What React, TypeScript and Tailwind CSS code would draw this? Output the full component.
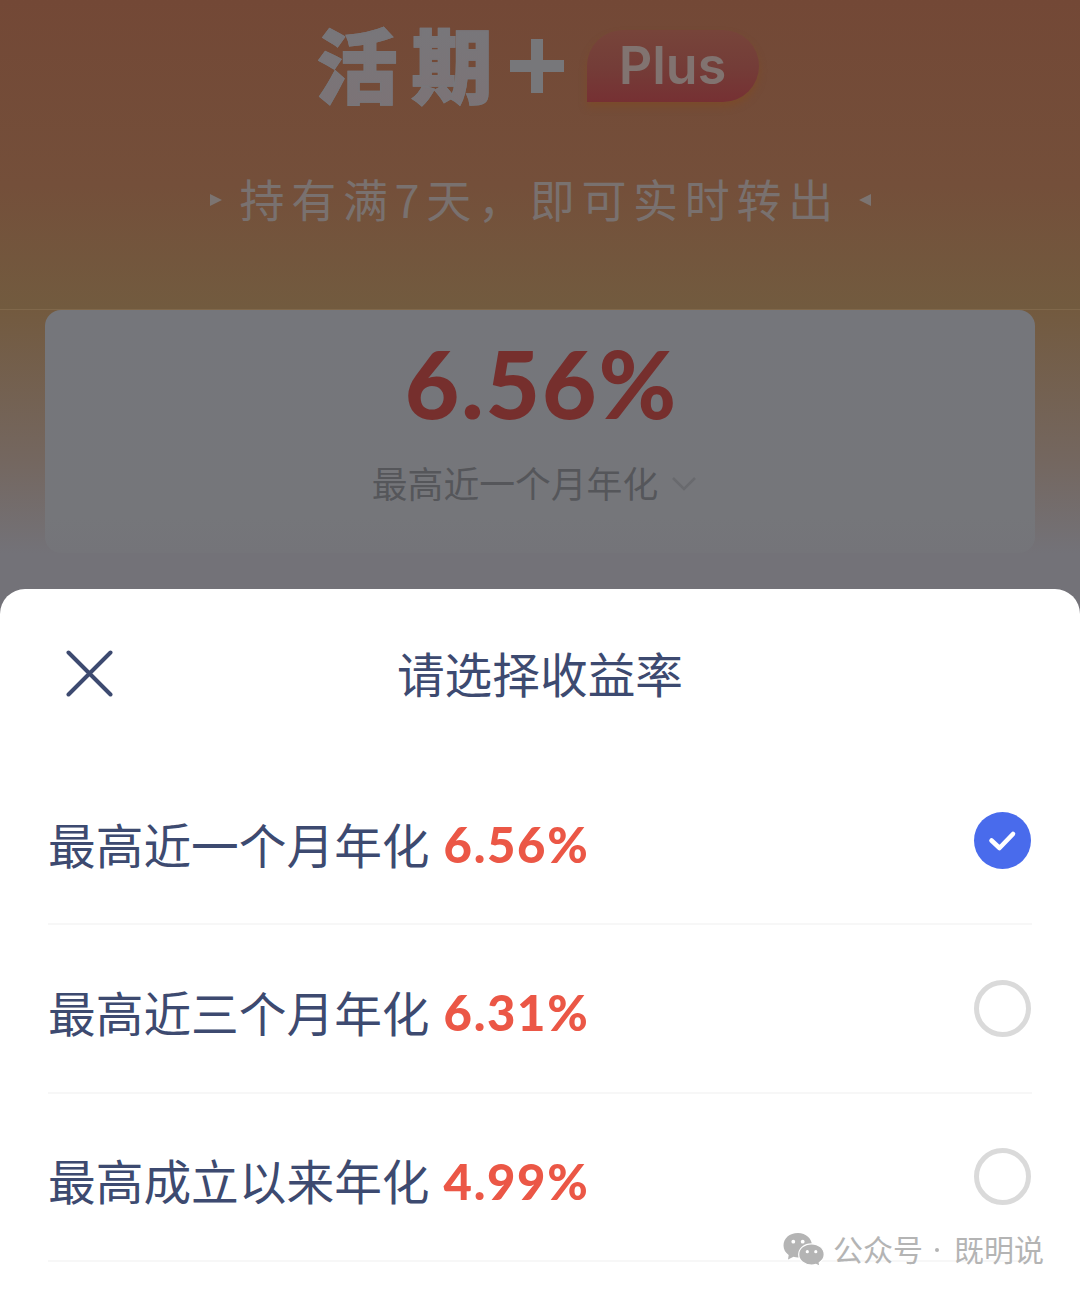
import React from 'react';

const options = [
  { label: '最高近一个月年化', rate: '6.56%', selected: true },
  { label: '最高近三个月年化', rate: '6.31%', selected: false },
  { label: '最高成立以来年化', rate: '4.99%', selected: false },
];

function Hero() {
  return (
    <header className="flex h-[309px] w-full flex-col items-center bg-linear-to-b from-[#734836] via-[#744f3a] via-60% to-[#725b3f]">
      <div className="mt-[16px] flex h-[100px] items-center pr-[5px]">
        <h1 className="-mt-[9px] w-[192px] shrink-0 bg-linear-to-b from-[#77777b] to-[#7c7376] bg-clip-text text-[81px] leading-[100px] font-black tracking-[14px] whitespace-nowrap text-transparent [-webkit-text-stroke:1.5px_#78767a]">
          活期
        </h1>
        <svg className="ml-px h-[54px] w-[54px] shrink-0" viewBox="0 0 54 54" fill="#77777a">
          <path d="M21 0H33V21H54V33H33V54H21V33H0V21H21Z" />
        </svg>
        <div className="ml-[23px] flex h-[72px] w-[172px] items-center justify-center rounded-tl-[36px] rounded-r-[36px] bg-linear-to-b from-[#77443a] via-[#743d38] to-[#763033] font-['Inter',sans-serif] text-[52px] font-semibold text-[#817370] shadow-[0_5px_7px_#7a4b2c]">
          Plus
        </div>
      </div>
      <div className="mt-[53px] flex h-[62px] items-center">
        <svg className="h-[12px] w-[13px]" viewBox="0 0 13 12" fill="#7c7471"><path d="M1 0L13 6L1 12Z" /></svg>
        <p className="-mt-[2px] ml-[18px] w-[619px] text-[45px] leading-[62px] tracking-[6.7px] whitespace-nowrap text-[#79716f]">
          持有满7天，即可实时转出
        </p>
        <svg className="h-[12px] w-[13px]" viewBox="0 0 13 12" fill="#7c7471"><path d="M12 0L0 6L12 12Z" /></svg>
      </div>
    </header>
  );
}

function RateCard() {
  return (
    <section className="h-[305px] border-t border-[#80684b] bg-linear-to-b from-[#735a3f] via-[#746760] via-50% to-[#737278] to-80% px-[45px]">
      <div className="flex h-[243px] flex-col items-center rounded-[16px] bg-linear-to-b from-[#75767b] via-[#75767a] via-85% to-[#747479]">
        <div className="mt-[17px] h-[112px] pl-[3px] font-['Lato',sans-serif] text-[94px] leading-[112px] font-black tracking-[2px] text-[#762f2d]">
          6.56%
        </div>
        <div className="mt-[17px] flex h-[52px] items-center pr-[12px]">
          <span className="text-[35.8px] leading-[52px] text-[#55565a]">最高近一个月年化</span>
          <svg className="mt-[4px] ml-[14px] h-[16px] w-[24px]" viewBox="0 0 24 16" fill="none" stroke="#696a6e" strokeWidth="2.5">
            <path d="M1 2L12 13L23 2" />
          </svg>
        </div>
      </div>
    </section>
  );
}

function Radio({ selected }: { selected: boolean }) {
  if (!selected) {
    return <span className="h-[57px] w-[57px] rounded-full border-5 border-[#dadada]" />;
  }
  return (
    <span className="flex h-[57px] w-[57px] items-center justify-center rounded-full bg-[#496bec]">
      <svg className="h-[57px] w-[57px]" viewBox="0 0 57 57" fill="none" stroke="#fff" strokeWidth="4.6" strokeLinecap="round" strokeLinejoin="round">
        <path d="M17.5 28.5L25.5 36L39 22" />
      </svg>
    </span>
  );
}

function Watermark() {
  return (
    <div className="absolute top-[1224px] left-[783px] flex h-[50px] items-center text-[#b4b4b4]">
      <svg className="mt-px h-[34px] w-[41px]" viewBox="0 0 41 34">
        <path fill="#b4b4b4" d="M15 0C6.5 0 .5 5.4.5 12.5c0 4 2 7.2 5.2 9.5L5 26.5l5.5-2.7c1.5.4 3 .6 4.5.6 8 0 14-5.4 14-12S23 0 15 0Z" />
        <path fill="#b4b4b4" stroke="#fff" strokeWidth="1.2" d="M28.5 10.8c-7.2 0-12.8 4.7-12.8 10.7S21.3 32 28.5 32c1.5 0 3-.2 4.4-.6l4.1 2-.8-3.7c3-2 5-4.9 5-8.2 0-6-5.5-10.7-12.7-10.7Z" />
        <g fill="#fff"><circle cx="10.3" cy="8.7" r="1.9" /><circle cx="19.7" cy="8.7" r="1.9" /><circle cx="24.3" cy="18.7" r="1.6" /><circle cx="32.8" cy="18.7" r="1.6" /></g>
      </svg>
      <span className="-mt-[3px] ml-[9px] text-[30px] leading-[50px] whitespace-nowrap">公众号</span>
      <span className="mx-[11.5px] mt-px h-[4px] w-[4px] rounded-full bg-[#b4b4b4]" />
      <span className="-mt-[3px] ml-[4px] text-[30px] leading-[50px] whitespace-nowrap">既明说</span>
    </div>
  );
}

export default function App() {
  return (
    <main className="relative h-[1294px] w-[1080px] overflow-hidden bg-[#737278] font-['Noto_Sans_CJK_SC',sans-serif]">
      <Hero />
      <RateCard />
      <section className="relative -mt-[25px] h-[705px] rounded-t-[25px] bg-white px-[48px] text-[#3d4a70]">
        <div className="grid h-[168px] grid-cols-[83px_1fr_83px] items-center">
          <button aria-label="关闭" className="pl-[18px]">
            <svg className="h-[47px] w-[47px]" viewBox="0 0 47 47" stroke="#3d4a70" strokeWidth="4" strokeLinecap="round">
              <path d="M2.5 2.5L44.5 44.5M44.5 2.5L2.5 44.5" />
            </svg>
          </button>
          <h2 className="text-center text-[47.7px] leading-[70px]">请选择收益率</h2>
        </div>
        {options.map(({ label, rate, selected }) => (
          <div key={label} className="flex h-[168.3px] items-center justify-between border-b-2 border-[#f7f7f7] pr-[1px]">
            <div className="flex items-center pt-[7px]">
              <span className="text-[47.7px] leading-[70px]">{label}</span>
              <span className="ml-[14px] pt-[1px] font-['Lato',sans-serif] text-[49px] leading-[70px] font-black tracking-[1.7px] text-[#eb5746]">{rate}</span>
            </div>
            <Radio selected={selected} />
          </div>
        ))}
      </section>
      <Watermark />
    </main>
  );
}
